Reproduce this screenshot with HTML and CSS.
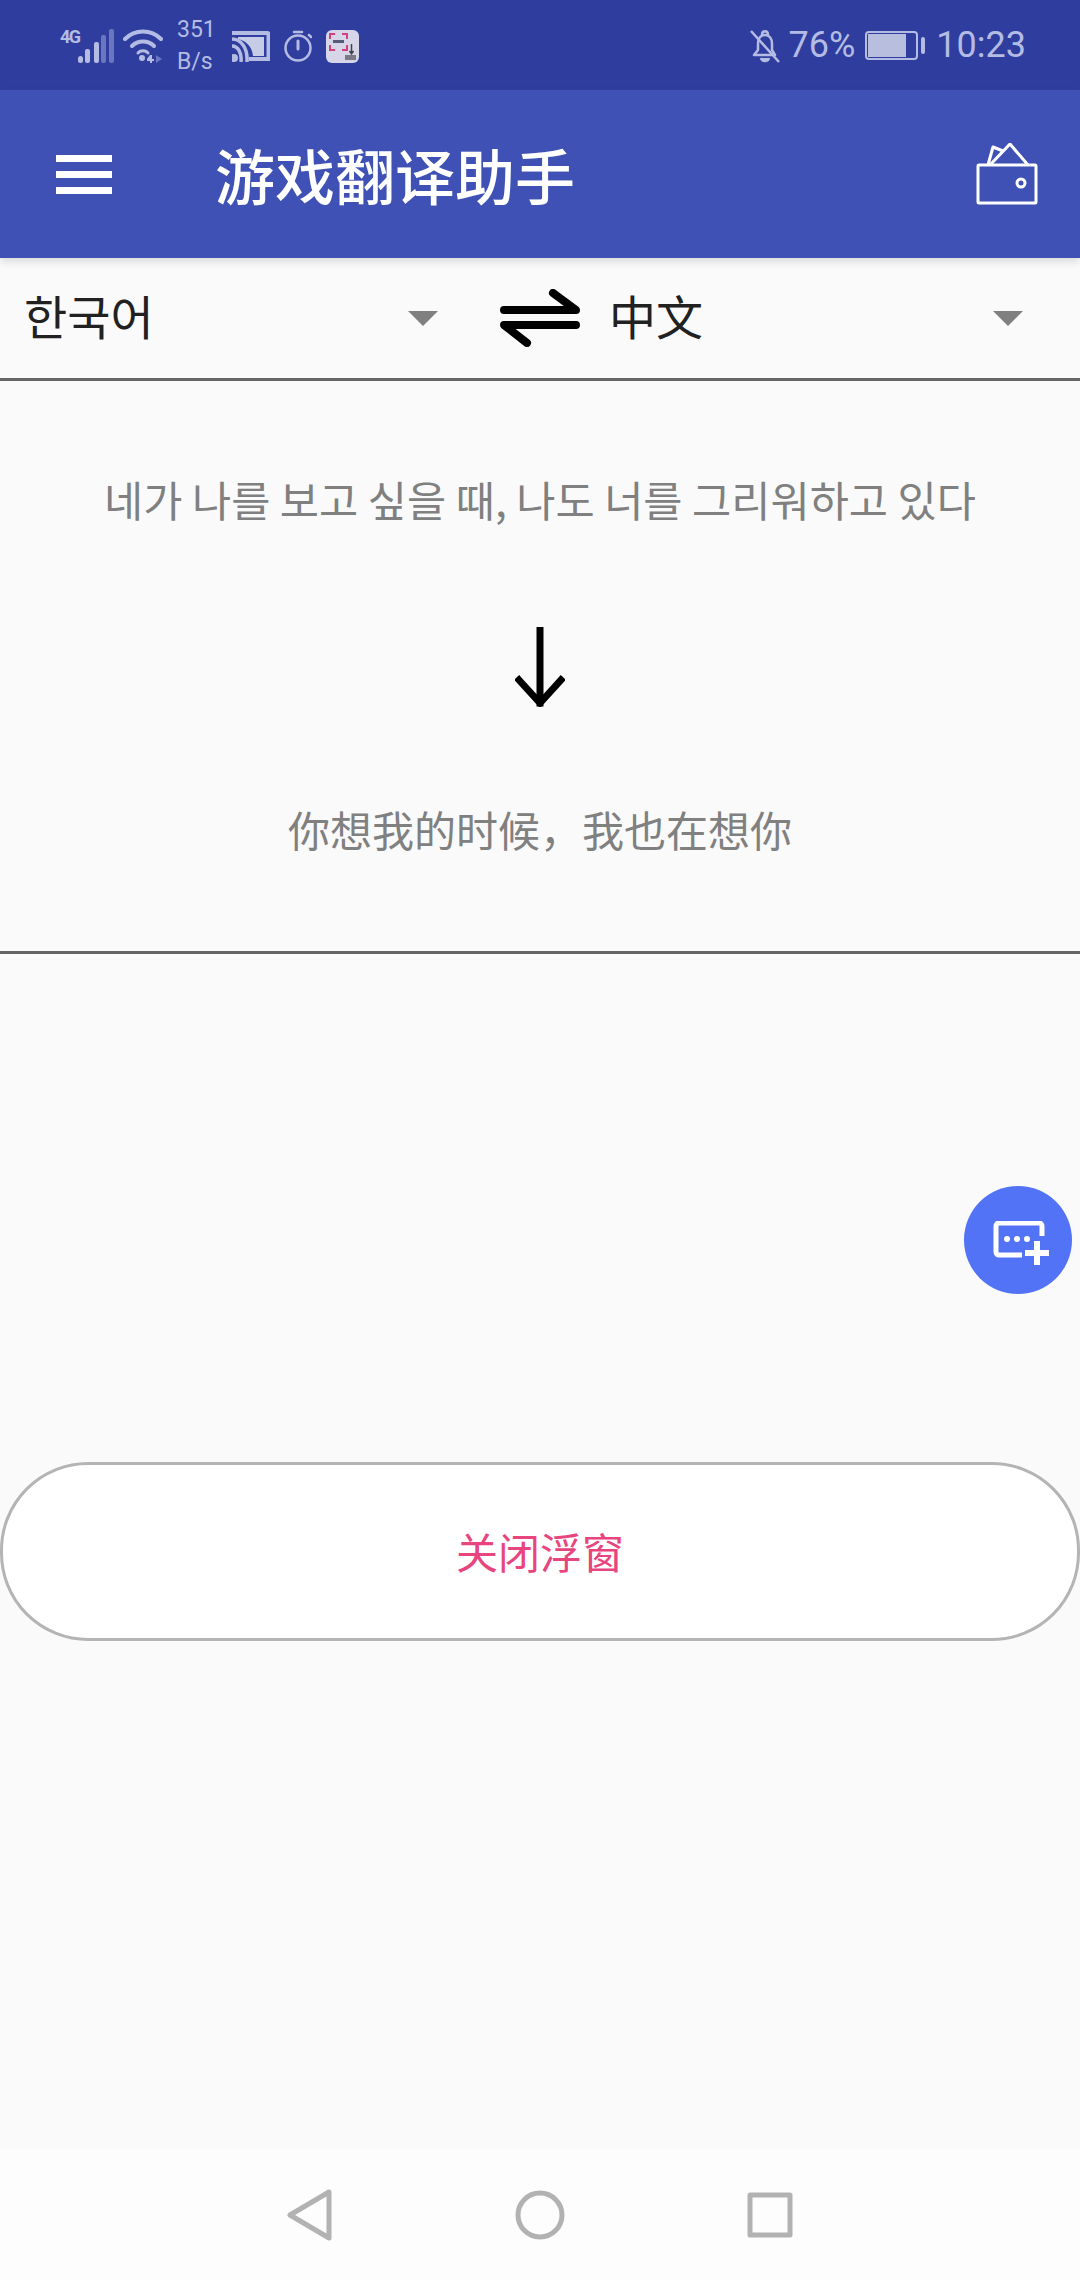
FILE: index.html
```html
<!DOCTYPE html>
<html lang="zh-CN">
<head>
    <meta charset="UTF-8">
    <meta name="viewport" content="width=device-width, initial-scale=1.0">
    <title>游戏翻译助手</title>
    <link rel="stylesheet" href="styles.css">
</head>
<body>
    <div class="status-bar">
        <div class="status-left">
            <span class="net-label">4G</span>
            <svg class="ic-signal" width="36" height="36" viewBox="0 0 36 36">
                <g fill="#b4bce4">
                    <rect x="0" y="28" width="5" height="7" rx="2.5"/>
                    <rect x="7" y="21" width="5" height="14" rx="2"/>
                    <rect x="16" y="14" width="5" height="21" rx="2"/>
                </g>
                <g fill="#6a76bf">
                    <rect x="23" y="7" width="5" height="28" rx="2"/>
                    <rect x="31" y="1" width="5" height="34" rx="2"/>
                </g>
            </svg>
            <svg class="ic-wifi" width="40" height="36" viewBox="0 0 40 36" fill="none" stroke="#b4bce4" stroke-width="4" stroke-linecap="round">
                <path d="M2 11 C12 1 28 1 38 11"/>
                <path d="M9 18 C15 12 25 12 31 18"/>
                <path d="M15 25 C17 22 23 22 25 25" stroke-width="3"/>
                <circle cx="19" cy="30" r="3" fill="#b4bce4" stroke="none"/>
                <path d="M27 27 H29 V31 H31 V33 H29 V35 H27 V33 H24 V31 Z" fill="#b4bce4" stroke="none"/>
                <path d="M33 27 L39 31 L33 35 Z" fill="#6a76bf" stroke="none"/>
            </svg>
            <div class="net-speed"><span>351</span><span>B/s</span></div>
            <svg class="ic-cast" width="38" height="32" viewBox="0 0 38 32" fill="none">
                <path d="M0 3 H35 a1.500 1.500 0 0 1 1.500 1.500 V29 H17" stroke="#b4bce4" stroke-width="4"/>
                <path d="M6 7 H32 V26 H21 C20 17 15 11 6 9 Z" fill="#c6cbe6"/>
                <g stroke="#b4bce4" fill="none" stroke-width="3.500">
                    <path d="M0 9 C9 9 16 18 15 32"/>
                    <path d="M0 16 C6 16 10 23 9 32"/>
                </g>
                <circle cx="2" cy="28" r="4" fill="#b4bce4"/>
            </svg>
            <svg class="ic-timer" width="28" height="32" viewBox="0 0 28 32" fill="none" stroke="#b4bce4" stroke-width="2.500" stroke-linecap="round">
                <circle cx="14" cy="18" r="12.500"/>
                <path d="M10 2 H18"/>
                <path d="M14 11 V19" stroke-width="3"/>
                <path d="M25 5 L27 7"/>
            </svg>
            <svg class="ic-app" width="33" height="33" viewBox="0 0 33 33">
                <rect width="33" height="33" rx="6" fill="#d6d6e8"/>
                <path d="M4 9 V4 H9 M4 15 V20 H9 M16 20 H21 V15 M16 4 H21 V9" fill="none" stroke="#d2417c" stroke-width="2"/>
                <rect x="7" y="10" width="11" height="3" fill="#555a78"/>
                <path d="M25.500 14 V23 M23.500 21 L25.500 24 L27.500 21" fill="none" stroke="#444" stroke-width="1.500"/>
                <rect x="19" y="25" width="11" height="5" fill="#7a7a86"/>
            </svg>
        </div>
        <div class="status-right">
            <svg class="ic-bell" width="30" height="34" viewBox="0 0 30 34" fill="none" stroke="#b4bce4" stroke-width="2.500">
                <path d="M4 26 H25 L22 21 V15 C22 9 19 6 15 6 C11 6 8 9 8 15 V21 Z" stroke-linejoin="round"/>
                <path d="M12 6 C12 1 18 1 18 6"/>
                <path d="M11 29 C12 33 18 33 19 29" fill="#b4bce4"/>
                <path d="M1 2 L29 33"/>
            </svg>
            <span class="battery-pct">76%</span>
            <div class="battery">
                <div class="battery-body"><div class="battery-fill"></div></div>
                <div class="battery-nub"></div>
            </div>
            <span class="clock">10:23</span>
        </div>
    </div>

    <header class="app-bar">
        <div class="menu-btn"><span></span><span></span><span></span></div>
        <h1 class="app-title">游戏翻译助手</h1>
        <svg class="ic-wallet" width="62" height="62" viewBox="0 0 62 62" fill="none" stroke="#fff" stroke-width="3" stroke-linejoin="round">
            <rect x="2" y="22" width="58" height="38" rx="1"/>
            <path d="M12 22 L17 4 L27 8"/>
            <path d="M14 22 L34 1 L52 22"/>
            <circle cx="45" cy="40" r="4"/>
        </svg>
    </header>

    <div class="lang-row">
        <div class="lang lang-from">
            <span class="lang-name">한국어</span>
            <i class="caret"></i>
        </div>
        <svg class="ic-swap" width="80" height="58" viewBox="0 0 80 58" fill="none" stroke="#000" stroke-width="8" stroke-linecap="round" stroke-linejoin="round">
            <path d="M4 21 H76 L53 4"/>
            <path d="M76 36 H4 L27 54"/>
        </svg>
        <div class="lang lang-to">
            <span class="lang-name">中文</span>
            <i class="caret"></i>
        </div>
    </div>

    <section class="result">
        <p class="result-text result-ko">네가 나를 보고 싶을 때, 나도 너를 그리워하고 있다</p>
        <svg class="ic-down" width="50" height="80" viewBox="0 0 50 80" fill="none" stroke="#000" stroke-width="7" stroke-linecap="square">
            <path d="M25 2 V76"/>
            <path d="M4 53 L25 76 L46 53"/>
        </svg>
        <p class="result-text">你想我的时候，我也在想你</p>
    </section>

    <button class="close-btn" type="button">关闭浮窗</button>

    <nav class="nav-bar">
        <svg width="46" height="52" viewBox="0 0 46 52" fill="none" stroke="#b2b2b2" stroke-width="5" stroke-linejoin="round">
            <path d="M3 26 L42 3 V49 Z"/>
        </svg>
        <svg width="50" height="50" viewBox="0 0 50 50" fill="none" stroke="#b2b2b2" stroke-width="5">
            <circle cx="25" cy="25" r="22"/>
        </svg>
        <svg width="46" height="46" viewBox="0 0 46 46" fill="none" stroke="#b2b2b2" stroke-width="5" stroke-linejoin="round">
            <rect x="3" y="3" width="40" height="40"/>
        </svg>
    </nav>

    <div class="fab">
        <svg width="56" height="50" viewBox="0 0 56 50" fill="none" stroke="#fff" stroke-width="5">
            <path d="M29 34 H6 a3 3 0 0 1 -3 -3 V5 a3 3 0 0 1 3 -3 H46 a3 3 0 0 1 3 3 V15"/>
            <path d="M44 20 V44 M32 32 H56" stroke-width="6"/>
            <circle cx="14" cy="18" r="3" fill="#fff" stroke="none"/>
            <circle cx="24" cy="18" r="3" fill="#fff" stroke="none"/>
            <circle cx="34" cy="18" r="3" fill="#fff" stroke="none"/>
        </svg>
    </div>
</body>
</html>
```

FILE: styles.css
```css
* {
    box-sizing: border-box;
}
body {
    margin: 0;
    width: 1080px;
    height: 2280px;
    display: flex;
    flex-direction: column;
    position: relative;
    overflow: hidden;
    background: #fafafa;
    font-family: "Noto Sans CJK SC", "Noto Sans CJK KR", Roboto, sans-serif;
}

/* status bar */
.status-bar {
    height: 90px;
    flex-shrink: 0;
    padding: 0 54px 0 60px;
    display: flex;
    align-items: center;
    justify-content: space-between;
    background: #2f3e9e;
    color: #b4bce4;
    font-family: Roboto, sans-serif;
}
.status-left, .status-right {
    display: flex;
    align-items: center;
}
.net-label {
    width: 18px;
    margin-top: -18px;
    font-size: 18px;
    font-weight: 700;
    letter-spacing: -1.5px;
    white-space: nowrap;
}
.ic-signal {
    margin-top: 2px;
}
.ic-wifi {
    margin-left: 9px;
    margin-top: 2px;
}
.net-speed {
    margin-left: 14px;
    padding-top: 2px;
    display: flex;
    flex-direction: column;
    font-size: 23px;
    line-height: 32px;
    width: 38px;
}
.ic-cast {
    margin-left: 17px;
    margin-top: 2px;
}
.ic-timer {
    margin-left: 14px;
    margin-top: 2px;
}
.ic-app {
    margin-left: 14px;
    margin-top: 2px;
}
.ic-bell {
    margin-top: 2px;
}
.battery-pct {
    margin-left: 9px;
    font-size: 36px;
}
.battery {
    margin-left: 10px;
    display: flex;
    align-items: center;
}
.battery-body {
    width: 53px;
    height: 29px;
    padding: 1px;
    border: 2px solid #b4bce4;
    border-radius: 4px;
}
.battery-fill {
    width: 38px;
    height: 100%;
    background: #b8bede;
}
.battery-nub {
    margin-left: 3px;
    width: 4px;
    height: 17px;
    border-radius: 2px;
    background: #b4bce4;
}
.clock {
    margin-left: 11px;
    font-size: 36px;
}

/* app bar */
.app-bar {
    height: 168px;
    flex-shrink: 0;
    padding: 0 42px 0 56px;
    display: flex;
    align-items: center;
    background: #3f51b5;
    box-shadow: 0 4px 8px rgba(0, 0, 0, 0.12);
    position: relative;
}
.menu-btn {
    width: 56px;
    display: flex;
    flex-direction: column;
    gap: 9px;
}
.menu-btn span {
    height: 7px;
    background: #fff;
}
.app-title {
    margin: 0 0 0 103px;
    flex: 1;
    color: #fff;
    font-size: 60px;
    font-weight: 500;
    line-height: 80px;
}

/* language row */
.lang-row {
    height: 123px;
    flex-shrink: 0;
    display: flex;
    align-items: center;
    border-bottom: 3px solid #666;
}
.lang {
    display: flex;
    align-items: center;
    justify-content: space-between;
    color: #212121;
}
.lang-name {
    margin-top: -6px;
    font-size: 47px;
    line-height: 60px;
}
.lang-from {
    width: 438px;
    padding-left: 24px;
}
.lang-to {
    margin-left: 29px;
    width: 414px;
}
.ic-swap {
    margin-left: 62px;
}
.caret {
    width: 0;
    height: 0;
    border-left: 15px solid transparent;
    border-right: 15px solid transparent;
    border-top: 15px solid #808080;
}

/* translation result */
.result {
    height: 573px;
    flex-shrink: 0;
    padding-top: 88px;
    display: flex;
    flex-direction: column;
    align-items: center;
    border-bottom: 3px solid #666;
}
.result-text {
    margin: 0;
    font-size: 42px;
    line-height: 60px;
    color: #808080;
}
.result-ko {
    font-size: 42.6px;
}
.ic-down {
    margin-top: 98px;
    margin-bottom: 92px;
}

/* close button */
.close-btn {
    margin-top: 508px;
    width: 1080px;
    height: 179px;
    flex-shrink: 0;
    padding: 0 0 2px;
    background: #fff;
    border: 3px solid #b4b4b4;
    border-radius: 88px;
    color: #e8457f;
    font-family: inherit;
    font-size: 42px;
}

/* nav bar */
.nav-bar {
    margin-top: auto;
    height: 130px;
    padding: 0 287px;
    display: flex;
    align-items: center;
    justify-content: space-between;
    background: #fdfdfd;
}

/* floating button over the page */
.fab {
    position: absolute;
    left: 964px;
    top: 1186px;
    width: 108px;
    height: 108px;
    border-radius: 50%;
    display: flex;
    align-items: center;
    justify-content: center;
    background: #5273f5;
}
.fab svg {
    margin-left: 6px;
    margin-top: 12px;
}
```
